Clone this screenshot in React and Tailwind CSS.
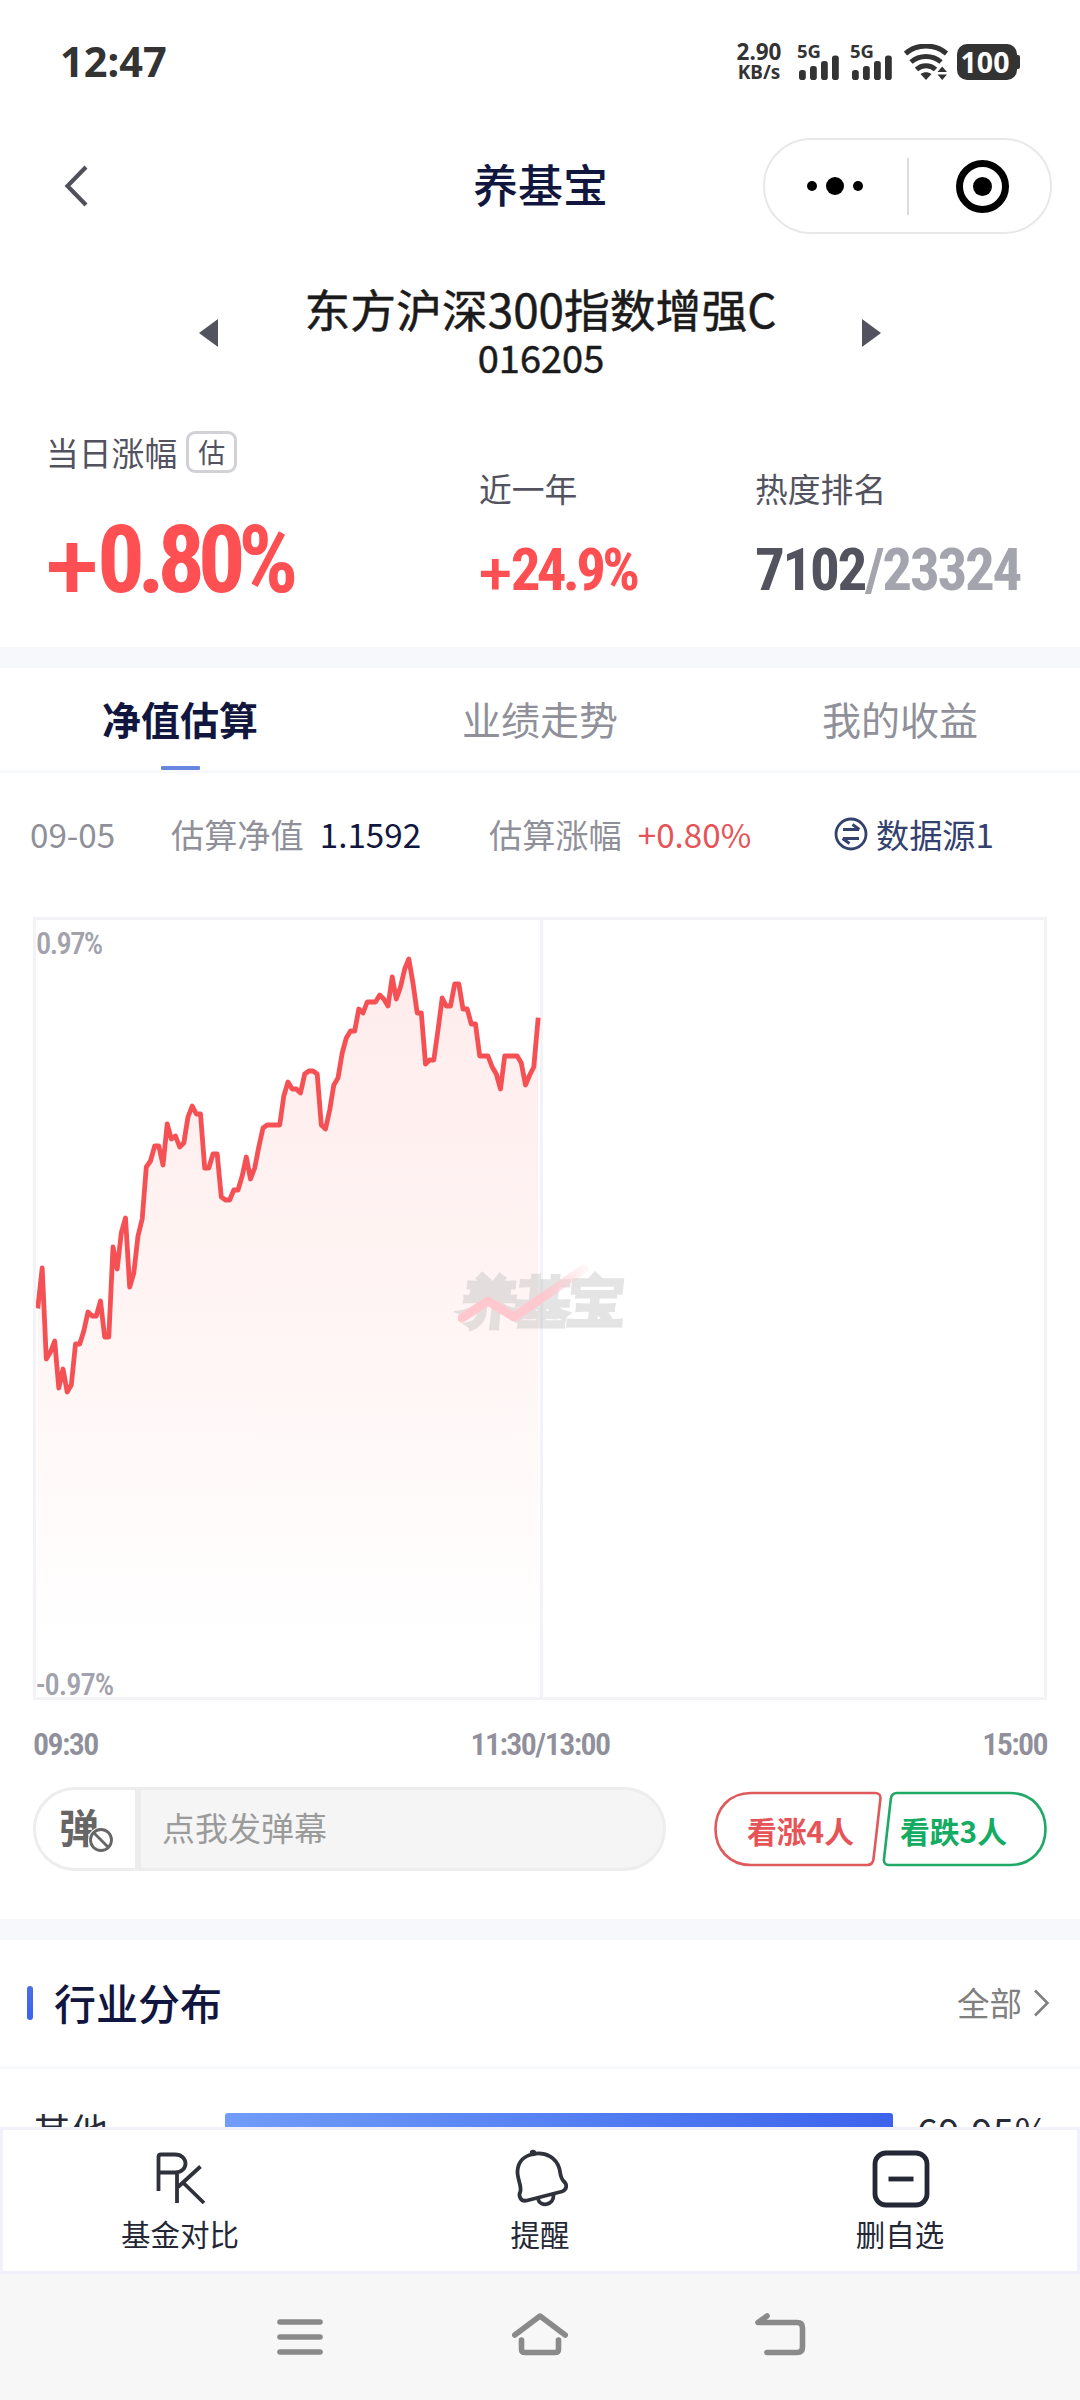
import React from 'react';

// Une valeur par minute, de 09:30 à 11:30 (ordonnées dans le repère du graphique)
const MORNING = [
  386, 348, 439, 432, 421, 468, 449, 472, 465, 424, 424, 411, 392, 396, 396, 381, 417, 417, 327, 349,
  313, 298, 367, 353, 316, 299, 247, 241, 226, 226, 245, 204, 219, 216, 227, 223, 197, 186, 194, 194,
  248, 248, 234, 234, 277, 280, 280, 270, 270, 256, 237, 259, 248, 227, 208, 205, 205, 205, 205, 176,
  162, 169, 169, 173, 154, 151, 151, 154, 205, 209, 190, 165, 158, 133, 118, 111, 111, 89, 93, 82,
  82, 82, 75, 79, 86, 57, 79, 67, 49, 39, 63, 93, 93, 144, 140, 140, 110, 78, 86, 86,
  64, 64, 89, 89, 104, 104, 136, 136, 136, 147, 154, 169, 136, 136, 136, 136, 143, 165, 155, 147,
  100,
];

const linePoints = MORNING.map((y, i) => `${(2 + i * 4.1667).toFixed(1)},${y}`).join(' ');

const SignalBars = () => (
  <div className="relative h-9 w-[43px]">
    <span className="absolute left-0 top-0 text-[18.5px] leading-[14px] font-bold">5G</span>
    <svg className="absolute inset-0" width="43" height="36" viewBox="0 0 43 36" fill="#333">
      <rect x="2" y="26" width="6.8" height="10" rx="2.8" />
      <rect x="13" y="22" width="6.8" height="14" rx="2.8" />
      <rect x="24" y="17" width="6.8" height="19" rx="2.8" />
      <rect x="35" y="11.5" width="6.8" height="24.5" rx="2.8" />
    </svg>
  </div>
);

const StatusBar = () => (
  <div className="flex h-[120px] items-center justify-between pl-[60px] pr-[60px] font-['Noto_Sans'] text-[#333]">
    <span className="mt-[3px] text-[41.5px] font-bold leading-none">12:47</span>
    <div className="mt-[4px] flex h-9 items-start">
      <div className="mr-[15px] flex w-[46px] flex-col items-center font-bold">
        <span className="text-[22.5px] leading-[16px]">2.90</span>
        <span className="mt-[4px] text-[19px] leading-[16px]">KB/s</span>
      </div>
      <div className="mr-[10px]"><SignalBars /></div>
      <SignalBars />
      <svg className="ml-[11px]" width="44" height="36" viewBox="0 0 44 36" fill="none" stroke="#333" strokeWidth="5">
        <path d="M1.500 9.500C13 -.5 31 -.5 42.500 9.500" />
        <path d="M7 18C15.500 10.500 28.500 10.500 37 18" />
        <path d="M12.500 25.500C18 20.500 26 20.500 31.500 25.500" />
        <path d="M16.500 30C20 27.500 24 27.500 27.500 30L22 36Z" fill="#333" stroke="none" />
        <path d="M33.500 28L38.200 22.500L43 28ZM33.500 30.500L38.200 36L43 30.500Z" fill="#333" stroke="none" />
      </svg>
      <div className="ml-[9px] flex items-center">
        <div className="flex h-9 w-[60px] items-center justify-center rounded-[10px] bg-[#333] pr-[4px]">
          <span className="text-[28.5px] font-bold leading-none text-white">100</span>
        </div>
        <div className="h-[14px] w-[3px] rounded-r-[2px] bg-[#333]" />
      </div>
    </div>
  </div>
);

const NavBar = () => (
  <div className="grid h-[132px] grid-cols-[1fr_auto_1fr] items-center pr-[28px]">
    <svg className="ml-[61px]" width="28" height="44" viewBox="0 0 28 44" fill="none" stroke="#4f505c" strokeWidth="4.2">
      <path d="M25 3L6.500 22L25 41" />
    </svg>
    <h1 className="-mt-[5px] pl-[29px] text-[45px] font-medium leading-[50px] text-[#11163f]">养基宝</h1>
    <div className="flex h-24 w-[289px] items-center justify-self-end rounded-full border-2 border-[#e8e8e8]">
      <div className="flex flex-1 items-center justify-center gap-[9px] pr-[2px]">
        <i className="size-[10px] rounded-full bg-black" />
        <i className="size-[18px] rounded-full bg-black" />
        <i className="size-[10px] rounded-full bg-black" />
      </div>
      <div className="h-[57px] w-[2px] bg-[#dcdcdc]" />
      <div className="flex w-[141px] items-center justify-center pl-[6px]">
        <div className="flex size-[53px] items-center justify-center rounded-full border-[7px] border-black">
          <i className="size-[19px] rounded-full bg-black" />
        </div>
      </div>
    </div>
  </div>
);

const FundHeader = () => (
  <div className="flex h-[127px] items-start justify-between px-[199px] pt-[31px]">
    <svg className="mt-[36px]" width="19" height="28" viewBox="0 0 19 28"><path d="M19 0V28L0 14Z" fill="#52535f" /></svg>
    <div className="text-center text-[#1b1b1b]">
      <p className="pl-[1px] text-[45.8px] leading-[50px] [-webkit-text-stroke:0.5px_#1b1b1b]">东方沪深300指数增强C</p>
      <p className="mt-[1px] pl-[2px] text-[38px] leading-[46px] [-webkit-text-stroke:0.5px_#1b1b1b]">016205</p>
    </div>
    <svg className="mt-[36px]" width="19" height="28" viewBox="0 0 19 28"><path d="M0 0V28L19 14Z" fill="#52535f" /></svg>
  </div>
);

const Stats = () => (
  <div className="flex h-[268px] pl-[46px] text-[32.8px] text-[#52535f]">
    <div className="w-[433px] pt-[52px]">
      <div className="flex h-[42px] items-center">
        <span className="-mt-[1px] leading-[40px]">当日涨幅</span>
        <span className="ml-[9px] flex h-[42px] w-[51px] items-center justify-center rounded-[9px] border-[3px] border-[#d2d2d6] pb-[1px] text-[27px] leading-[30px]">估</span>
      </div>
      <p className="mt-[40px] whitespace-nowrap font-['Roboto_Condensed'] text-[94px] font-bold leading-[94px] tracking-[-7.2px] text-[#fe4f52]">
        <span className="relative top-[7px] font-['Roboto'] font-medium tracking-[-1px]">+</span>0.80%
      </p>
    </div>
    <div className="w-[276px] pt-[88px]">
      <p className="leading-[42px]">近一年</p>
      <p className="mt-[31px] whitespace-nowrap font-['Roboto_Condensed'] text-[59px] font-bold leading-[60px] tracking-[-3.8px] text-[#fe4f52]">
        <span className="relative top-[4px] font-['Roboto'] font-medium tracking-[-1px]">+</span>24.9%
      </p>
    </div>
    <div className="pt-[88px]">
      <p className="leading-[42px]">热度排名</p>
      <p className="mt-[31px] font-['Roboto_Condensed'] text-[59px] font-bold leading-[60px] tracking-[-2.3px]">
        7102<span className="text-[#a4a4af]">/23324</span>
      </p>
    </div>
  </div>
);

const TABS = ['净值估算', '业绩走势', '我的收益'];

const Tabs = () => (
  <div className="grid h-[105px] grid-cols-3 border-b-[3px] border-[#f7f8fa] text-[39px]">
    {TABS.map((tab, i) => (
      <div key={tab} className="flex flex-col items-center">
        <span className={i === 0 ? 'h-[98px] leading-[100px] font-bold text-[#11163f]' : 'h-[98px] leading-[100px] text-[#8f909a]'}>{tab}</span>
        {i === 0 && <div className="h-[4px] w-[39px] rounded-[1px] bg-[#6686e0]" />}
      </div>
    ))}
  </div>
);

const InfoRow = () => (
  <div className="grid h-[122px] grid-cols-[141px_318px_345px_auto] items-center whitespace-nowrap pl-[30px] text-[33.2px] leading-[44px] text-[#8f909a]">
    <span>09-05</span>
    <span className="flex gap-[16px]">估算净值<b className="font-normal text-[#11163f]">1.1592</b></span>
    <span className="flex gap-[16px]">估算涨幅<b className="font-normal text-[#e65458]">+0.80%</b></span>
    <span className="flex items-center gap-[8px] text-[#33416f]">
      <svg width="34" height="34" viewBox="0 0 34 34" fill="none" stroke="#33416f" strokeWidth="2.8">
        <circle cx="17" cy="17" r="15" />
        <path d="M9 12.500H25M18.500 7.500L25.500 12.500M25 21.500H9M15.500 26.500L8.500 21.500" />
      </svg>
      数据源1
    </span>
  </div>
);

const Watermark = () => (
  <div className="absolute left-[422px] top-[344px] h-[78px] w-[172px]">
    <span className="absolute left-[4px] top-[6px] -skew-x-6 whitespace-nowrap text-[54px] font-bold leading-[66px] text-[#bdbdbd] opacity-40 [-webkit-text-stroke:4px_#bdbdbd] [stroke-linejoin:round]">养基宝</span>
    <svg className="absolute inset-0" width="172" height="78" viewBox="0 0 172 78" fill="none">
      <defs>
        <linearGradient id="wm" x1="0" x2="1" y1="0" y2="0">
          <stop offset="0.65" stopColor="#ffc8cf" />
          <stop offset="1" stopColor="#ffc8cf" stopOpacity="0.15" />
        </linearGradient>
      </defs>
      <path d="M4 54L30 37L56 53L126 5" stroke="url(#wm)" strokeWidth="9" strokeLinecap="round" strokeLinejoin="round" />
    </svg>
  </div>
);

const Chart = () => (
  <div className="mx-[33px]">
    <div className="relative mt-[22px] h-[783px] border-[3px] border-[#f2f2f7] font-['Roboto_Condensed'] text-[30.5px] font-medium text-[#a2a2ad]">
      <svg className="block" width="1008" height="777" viewBox="0 0 1008 777" fill="none">
        <defs>
          <linearGradient id="area" x1="0" x2="0" y1="39" y2="777" gradientUnits="userSpaceOnUse">
            <stop offset="0" stopColor="#ffecec" />
            <stop offset="0.55" stopColor="#fff6f5" />
            <stop offset="0.92" stopColor="#fff" />
          </linearGradient>
        </defs>
        <path d="M505.500 0V777" stroke="#f2f2f7" strokeWidth="3" />
        <polygon points={`2,777 ${linePoints} 502,777`} fill="url(#area)" />
        <polyline points={linePoints} stroke="#f55054" strokeWidth="4.8" strokeLinejoin="round" strokeLinecap="square" />
      </svg>
      <span className="absolute left-0 top-[8px] leading-[32px] tracking-[-1.6px]">0.97%</span>
      <span className="absolute bottom-[-4px] left-0 leading-[32px] tracking-[-1px]">-0.97%</span>
      <Watermark />
    </div>
    <div className="mt-[24px] flex justify-between font-['Roboto_Condensed'] text-[32px] font-semibold leading-[40px] tracking-[-1.6px] text-[#8f909b]">
      <span>09:30</span>
      <span>11:30/13:00</span>
      <span>15:00</span>
    </div>
  </div>
);

const ActionRow = () => (
  <div className="mx-[33px] mt-[23px] flex h-[84px] items-center justify-between">
    <div className="flex h-[84px] w-[633px] overflow-hidden rounded-full border-[3px] border-[#ededed] bg-[#f5f5f5]">
      <div className="relative w-[105px] border-r-[6px] border-[#ededed] bg-white">
        <span className="absolute left-[23px] top-[14px] text-[40px] font-bold leading-[44px] text-[#666]">弹</span>
        <svg className="absolute left-[51px] top-[36px]" width="28" height="28" viewBox="0 0 28 28" fill="none">
          <circle cx="14" cy="14" r="13" fill="#fff" />
          <circle cx="14" cy="14" r="10.500" stroke="#666" strokeWidth="2.8" />
          <path d="M7 7L21 21" stroke="#666" strokeWidth="2.8" />
        </svg>
      </div>
      <span className="ml-[21px] text-[33px] leading-[74px] text-[#9b9b9b]">点我发弹幕</span>
    </div>
    <div className="relative flex h-[76px] w-[334px] items-center text-[29.8px] font-bold leading-[40px]">
      <svg className="absolute inset-0" width="334" height="76" viewBox="0 0 334 76" fill="none" strokeWidth="2.6">
        <path d="M38 2H162Q168 2 167.400 8L160.500 68Q159.800 74 154 74H38C16 74 2.500 58 2.500 38S16 2 38 2Z" stroke="#e0595c" />
        <path d="M297 2H184Q178.500 2 177.800 8L171 68Q170.400 74 176 74H297C319 74 332.500 58 332.500 38S319 2 297 2Z" stroke="#1fa866" />
      </svg>
      <span className="relative mt-[2px] w-[154px] pl-[34px] text-[#e65458]">看涨4人</span>
      <span className="relative mt-[2px] pl-[33px] text-[#14ab62]">看跌3人</span>
    </div>
  </div>
);

const Industry = () => (
  <div>
    <div className="flex h-[129px] items-center border-b-[3px] border-[#f7f8fa] pl-[27px] pr-[29px]">
      <div className="h-[34px] w-[6px] rounded-[3px] bg-gradient-to-b from-[#4a6fe0] to-[#3a62f0]" />
      <h2 className="-mt-[3px] ml-[21px] text-[42px] font-medium leading-[50px] text-[#11163f]">行业分布</h2>
      <span className="-mt-[3px] ml-auto text-[32.5px] leading-[40px] text-[#808080]">全部</span>
      <svg className="ml-[11px] mr-[1px]" width="17" height="28" viewBox="0 0 17 28" fill="none" stroke="#808080" strokeWidth="2.6">
        <path d="M2 1.500L14.500 14L2 26.500" />
      </svg>
    </div>
    <div className="flex h-[58px] items-start overflow-hidden pl-[33px] pt-[44px] text-[37.5px] leading-[34px] text-[#262936]">
      <span className="w-[192px]">其他</span>
      <div className="h-[36px] w-[668px] rounded-[3px] bg-gradient-to-r from-[#719cf8] to-[#3d63ec]" />
      <span className="ml-[24px] text-[37.5px] tracking-[0.8px]">69.95%</span>
    </div>
  </div>
);

const PkIcon = () => (
  <svg className="ml-[2px]" width="56" height="58" viewBox="0 0 56 58" fill="none" stroke="#2f313b" strokeWidth="3.8">
    <path d="M5.500 41V7Q5.500 4.500 8 4.500H22C36 4.500 36 22.500 22 22.500H5.500M24 24V53M47.500 16.500L25 37M30 32.500L51 53" />
  </svg>
);

const BellIcon = () => (
  <svg className="ml-[3px]" width="58" height="60" viewBox="0 0 58 60" fill="none" stroke="#2f313b" strokeWidth="3.8" strokeLinejoin="round">
    <path d="M7.500 42C8.500 36 4 29 4.500 22C5 13 11 7 20 5C33 2.500 43.500 9 46.500 20C47.500 25 47.500 29 50.500 32C55 36 53.500 41 49 42.500L14 51.500C7.500 53 5 47 7.500 42Z" />
    <path d="M25 50C27 58 41 57 40.500 46" />
    <circle cx="20" cy="4" r="3.200" fill="#2f313b" stroke="none" />
  </svg>
);

const MinusIcon = () => (
  <svg className="ml-[2px]" width="58" height="58" viewBox="0 0 58 58" fill="none" stroke="#242735" strokeWidth="4.8">
    <rect x="3" y="3" width="52" height="52" rx="11" />
    <path d="M16.500 29H41.500" />
  </svg>
);

const ACTIONS = [
  { label: '基金对比', Icon: PkIcon },
  { label: '提醒', Icon: BellIcon },
  { label: '删自选', Icon: MinusIcon },
];

const BottomBar = () => (
  <div className="grid h-[147px] grid-cols-3 bg-white text-[29.5px] leading-[40px] text-[#242735] shadow-[inset_0_0_0_3px_#f0f1fa]">
    {ACTIONS.map(({ label, Icon }) => (
      <div key={label} className="flex flex-col items-center pt-[22px]">
        <div className="flex h-[60px] items-center"><Icon /></div>
        <span className="mt-[4px]">{label}</span>
      </div>
    ))}
  </div>
);

const SystemNav = () => (
  <div className="flex flex-1 items-start justify-center gap-[184px] bg-[#f7f7f7] pt-[36px]">
    <svg width="56" height="50" viewBox="0 0 56 50" stroke="#8a8a8a" strokeWidth="5.6" strokeLinecap="round">
      <path d="M8 12H48M8 27H48M8 42H48" />
    </svg>
    <svg width="56" height="50" viewBox="0 0 56 50" fill="none" stroke="#8a8a8a" strokeWidth="5.6" strokeLinejoin="round" strokeLinecap="round">
      <path d="M2.800 25L28 6L53.200 25" />
      <path d="M9.500 30V39Q9.500 42.500 13 42.500H43Q46.500 42.500 46.500 39V30" />
    </svg>
    <svg width="56" height="50" viewBox="0 0 56 50" fill="none" stroke="#8a8a8a" strokeWidth="5.6" strokeLinejoin="round" strokeLinecap="round">
      <path d="M15 6L6 12.500H45Q50.500 12.500 50.500 18V37Q50.500 42.500 45 42.500H15" />
    </svg>
  </div>
);

export default function App() {
  return (
    <div className="flex h-[2400px] w-[1080px] flex-col overflow-hidden bg-white font-['Noto_Sans_CJK_SC',sans-serif]">
      <StatusBar />
      <NavBar />
      <FundHeader />
      <Stats />
      <div className="h-[21px] bg-[#f7f8fc]" />
      <Tabs />
      <InfoRow />
      <Chart />
      <ActionRow />
      <div className="mt-[48px] h-[21px] bg-[#f7f8fc]" />
      <Industry />
      <BottomBar />
      <SystemNav />
    </div>
  );
}
